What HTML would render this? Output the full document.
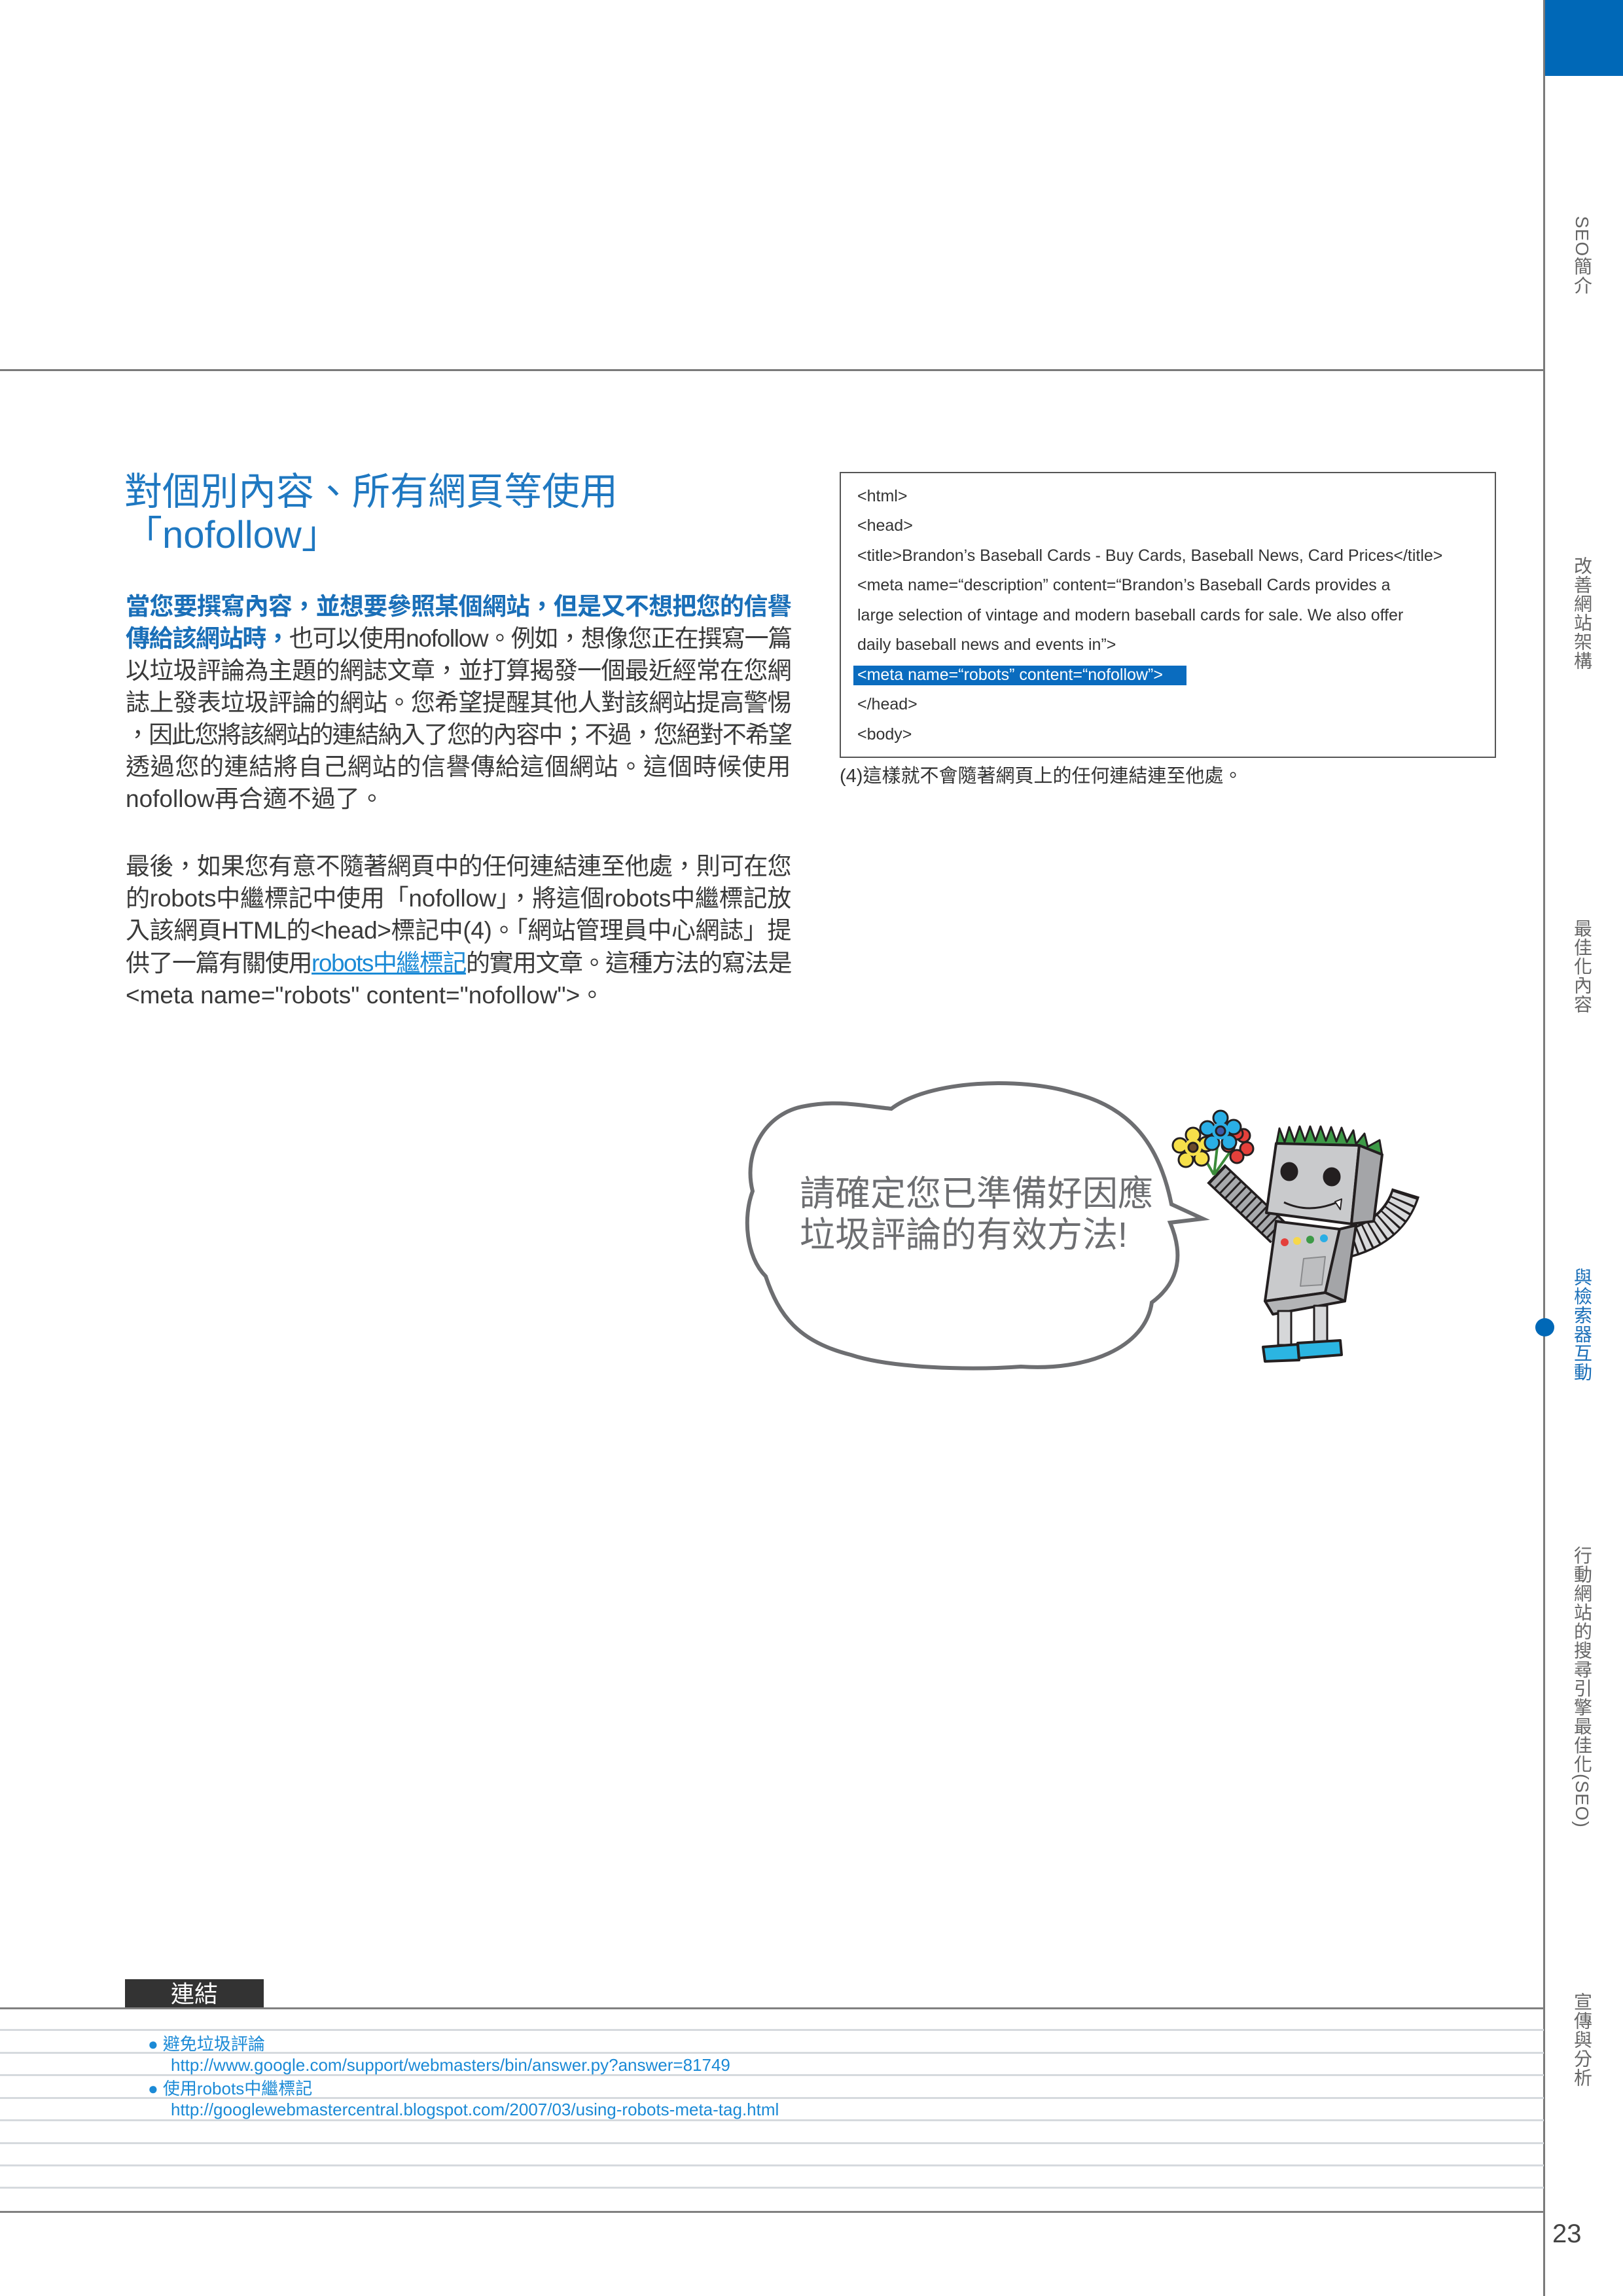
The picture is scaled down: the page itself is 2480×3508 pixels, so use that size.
<!DOCTYPE html>
<html><head><meta charset="utf-8">
<style>
*{margin:0;padding:0;box-sizing:border-box}
html,body{width:2480px;height:3508px;background:#fff;overflow:hidden}
body{position:relative;font-family:"Liberation Sans","Noto Sans CJK TC",sans-serif;color:#3a3a3a}
.a{position:absolute}
.ln{position:absolute;left:192px;width:1017px;white-space:nowrap;font-size:37px;line-height:49px;height:49px}
.ln>span.f{display:inline-block;white-space:nowrap}
.b{color:#1a6fb8;font-weight:bold}
.code{position:absolute;left:1310px;font-size:25px;line-height:45px;white-space:nowrap;color:#333}
.tab{position:absolute;left:2402px;writing-mode:vertical-rl;font-size:28px;color:#666;letter-spacing:1px;line-height:30px}
.lt{position:absolute;left:0;width:2359px;height:3px;background:#d6dade}
.lk{position:absolute;font-size:26px;color:#1b8ad6;white-space:nowrap;line-height:30px}
</style></head><body>

<div class="a" style="left:2360px;top:0;width:120px;height:116px;background:#0068b7"></div>
<div class="a" style="left:2358px;top:0;width:3px;height:3508px;background:#7a7a7a"></div>
<div class="a" style="left:0;top:564px;width:2359px;height:3px;background:#7a7a7a"></div>
<div class="a" style="left:2346px;top:2014px;width:29px;height:28px;border-radius:50%;background:#0068b7"></div>

<div class="tab" style="top:330px">SEO簡介</div>
<div class="tab" style="top:850px">改善網站架構</div>
<div class="tab" style="top:1404px">最佳化內容</div>
<div class="tab" style="top:1937px;color:#1a6fb8">與檢索器互動</div>
<div class="tab" style="top:2362px">行動網站的搜尋引擎最佳化(SEO)</div>
<div class="tab" style="top:3044px">宣傳與分析</div>

<div class="a" style="left:190px;top:719px;font-size:58px;line-height:66px;color:#1f78c1;white-space:nowrap">對個別內容、所有網頁等使用<br>「nofollow」</div>

<div class="ln" style="top:902px"><span class="f j"><span class="b">當您要撰寫內容，並想要參照某個網站，但是又不想把您的信譽</span></span></div>
<div class="ln" style="top:951px"><span class="f j"><span class="b">傳給該網站時，</span>也可以使用nofollow。例如，想像您正在撰寫一篇</span></div>
<div class="ln" style="top:1000px"><span class="f j">以垃圾評論為主題的網誌文章，並打算揭發一個最近經常在您網</span></div>
<div class="ln" style="top:1049px"><span class="f j">誌上發表垃圾評論的網站。您希望提醒其他人對該網站提高警惕</span></div>
<div class="ln" style="top:1098px"><span class="f j">，因此您將該網站的連結納入了您的內容中；不過，您絕對不希望</span></div>
<div class="ln" style="top:1147px"><span class="f j">透過您的連結將自己網站的信譽傳給這個網站。這個時候使用</span></div>
<div class="ln" style="top:1196px"><span class="f">nofollow再合適不過了。</span></div>

<div class="ln" style="top:1299px"><span class="f j">最後，如果您有意不隨著網頁中的任何連結連至他處，則可在您</span></div>
<div class="ln" style="top:1348px"><span class="f j">的robots中繼標記中使用「nofollow」，將這個robots中繼標記放</span></div>
<div class="ln" style="top:1397px"><span class="f j">入該網頁HTML的&lt;head&gt;標記中(4)。「網站管理員中心網誌」提</span></div>
<div class="ln" style="top:1447px"><span class="f j">供了一篇有關使用<span style="color:#1b8ad6;text-decoration:underline">robots中繼標記</span>的實用文章。這種方法的寫法是</span></div>
<div class="ln" style="top:1496px"><span class="f">&lt;meta name="robots" content="nofollow"&gt;。</span></div>

<div class="a" style="left:1283px;top:721px;width:1003px;height:437px;border:2.5px solid #555"></div>
<div class="a" style="left:1304px;top:1017px;width:509px;height:30px;background:#0a6cbf"></div>
<div class="code" style="top:736px">&lt;html&gt;</div>
<div class="code" style="top:781px">&lt;head&gt;</div>
<div class="code" style="top:827px">&lt;title&gt;Brandon’s Baseball Cards - Buy Cards, Baseball News, Card Prices&lt;/title&gt;</div>
<div class="code" style="top:872px">&lt;meta name=“description” content=“Brandon’s Baseball Cards provides a</div>
<div class="code" style="top:918px">large selection of vintage and modern baseball cards for sale. We also offer</div>
<div class="code" style="top:963px">daily baseball news and events in”&gt;</div>
<div class="code" style="top:1009px;color:#fff">&lt;meta name=“robots” content=“nofollow”&gt;</div>
<div class="code" style="top:1054px">&lt;/head&gt;</div>
<div class="code" style="top:1100px">&lt;body&gt;</div>
<div class="a" style="left:1283px;top:1169px;font-size:29px;line-height:34px;color:#333;white-space:nowrap">(4)這樣就不會隨著網頁上的任何連結連至他處。</div>

<svg class="a" style="left:0;top:0" width="2360" height="2200" viewBox="0 0 2360 2200">
  <path d="M1362,1694 C1420,1650 1560,1645 1640,1670 C1720,1690 1770,1740 1790,1840 L1838,1862 L1788,1868 C1810,1920 1800,1960 1760,1990 C1750,2060 1660,2095 1560,2088 C1480,2094 1360,2090 1300,2070 C1220,2050 1190,2010 1170,1950 C1140,1920 1135,1860 1150,1820 C1135,1760 1170,1700 1230,1690 C1280,1680 1320,1690 1362,1694 Z" fill="#fff" stroke="#6d6e71" stroke-width="6"/>
  <g stroke="#231f20" stroke-width="3" stroke-linejoin="round">
    <path d="M1955,1885 L1858,1793" stroke="#231f20" stroke-width="40" fill="none"/>
    <path d="M1955,1885 L1860,1795" stroke="#a7a9ac" stroke-width="33" fill="none" stroke-dasharray="8 3"/>
    <path d="M2060,1900 Q2130,1880 2148,1822" stroke="#231f20" stroke-width="44" fill="none"/>
    <path d="M2060,1900 Q2130,1880 2147,1825" stroke="#d8d9db" stroke-width="37" fill="none" stroke-dasharray="8 3"/>
    <path d="M1855,1795 L1835,1760 M1855,1795 L1862,1735 M1855,1795 L1885,1752" stroke="#3b8b3a" stroke-width="4" fill="none"/>
    <g fill="#e4403b"><circle cx="1900" cy="1735" r="10"/><circle cx="1905" cy="1755" r="10"/><circle cx="1890" cy="1767" r="10"/><circle cx="1877" cy="1750" r="10"/><circle cx="1890" cy="1732" r="9"/></g>
    <g fill="#f6e04a"><circle cx="1823" cy="1734" r="11"/><circle cx="1843" cy="1748" r="11"/><circle cx="1836" cy="1770" r="11"/><circle cx="1812" cy="1772" r="11"/><circle cx="1803" cy="1750" r="11"/><circle cx="1823" cy="1753" r="13" stroke="none"/></g>
    <circle cx="1823" cy="1753" r="7" fill="#6b4a2b"/>
    <g fill="#2aaee5"><circle cx="1865" cy="1708" r="11"/><circle cx="1885" cy="1722" r="11"/><circle cx="1878" cy="1745" r="11"/><circle cx="1852" cy="1746" r="11"/><circle cx="1845" cy="1724" r="11"/><circle cx="1865" cy="1728" r="13" stroke="none"/></g>
    <circle cx="1865" cy="1728" r="7" fill="#3c5aa8"/>
    <path d="M1950,1750 L1955,1724 L1963,1745 L1970,1722 L1978,1744 L1986,1721 L1994,1743 L2002,1721 L2010,1743 L2018,1721 L2026,1743 L2034,1722 L2042,1744 L2050,1723 L2058,1745 L2068,1727 L2072,1748 L2085,1732 L2090,1752 L2108,1742 L2112,1765 Z" fill="#3d9a47"/>
    <path d="M1950,1747 L2077,1750 L2065,1870 L1935,1853 Z" fill="#c9cacc" stroke-width="4"/>
    <path d="M2077,1750 L2112,1764 L2099,1866 L2065,1870 Z" fill="#a4a5a8" stroke-width="4"/>
    <ellipse cx="1970" cy="1790" rx="12" ry="13" fill="#231f20"/>
    <ellipse cx="2035" cy="1798" rx="12" ry="13" fill="#231f20"/>
    <path d="M1962,1837 Q2000,1855 2043,1837" fill="none" stroke-width="3"/>
    <path d="M2040,1836 L2048,1848 L2050,1832 Z" fill="#fff" stroke-width="2"/>
    <path d="M1950,1866 L2047,1878 L2025,1975 L1933,1988 Z" fill="#c9cacc" stroke-width="4"/>
    <path d="M2047,1878 L2072,1872 L2055,1988 L2025,1975 Z" fill="#a4a5a8" stroke-width="4"/>
    <path d="M1933,1988 L2025,1975 L2055,1988 L1945,2008 Z" fill="#b3b4b6" stroke-width="4"/>
    <path d="M1992,1923 L2025,1920 L2020,1963 L1987,1965 Z" fill="#bdbec0" stroke="#8a8b8d" stroke-width="2"/>
    <rect x="1953" y="2003" width="20" height="52" fill="#d6d7d9"/>
    <rect x="2008" y="1995" width="20" height="55" fill="#d6d7d9"/>
    <path d="M1930,2058 L1983,2054 L1985,2078 L1933,2080 Z" fill="#2bb5e2" stroke-width="4"/>
    <path d="M1983,2052 L2048,2048 L2050,2070 L1985,2075 Z" fill="#2bb5e2" stroke-width="4"/>
  </g>
  <circle cx="1963" cy="1898" r="6" fill="#e4403b"/>
  <circle cx="1982" cy="1896" r="6" fill="#f6d84a"/>
  <circle cx="2002" cy="1894" r="6" fill="#3d9a47"/>
  <circle cx="2023" cy="1892" r="6" fill="#2aaee5"/>
</svg>
<div class="a" style="left:1222px;top:1793px;font-size:54px;line-height:63px;color:#6d6e71;white-space:nowrap">請確定您已準備好因應<br>垃圾評論的有效方法!</div>

<div class="a" style="left:191px;top:3024px;width:212px;height:45px;background:#333;color:#fff;font-size:36px;line-height:45px;text-align:center">連結</div>
<div class="a" style="left:0;top:3067px;width:2359px;height:3px;background:#808080"></div>
<div class="lt" style="top:3100px"></div>
<div class="lt" style="top:3135px"></div>
<div class="lt" style="top:3169px"></div>
<div class="lt" style="top:3204px"></div>
<div class="lt" style="top:3238px"></div>
<div class="lt" style="top:3273px"></div>
<div class="lt" style="top:3307px"></div>
<div class="lt" style="top:3341px"></div>
<div class="a" style="left:0;top:3378px;width:2359px;height:3px;background:#808080"></div>

<div class="lk" style="left:226px;top:3108px">● 避免垃圾評論</div>
<div class="lk" style="left:261px;top:3140px">http://www.google.com/support/webmasters/bin/answer.py?answer=81749</div>
<div class="lk" style="left:226px;top:3176px">● 使用robots中繼標記</div>
<div class="lk" style="left:261px;top:3208px">http://googlewebmastercentral.blogspot.com/2007/03/using-robots-meta-tag.html</div>

<div class="a" style="left:2372px;top:3390px;font-size:40px;line-height:46px;color:#444">23</div>
<script>
(function(){
  var els=document.querySelectorAll('.ln>span.f');
  for(var i=0;i<els.length;i++){
    var s=els[i];
    var w=s.getBoundingClientRect().width;
    var n=(s.textContent||'').length;
    if(s.classList.contains('j')){
      if(n>1){s.style.letterSpacing=((1017-w)/n)+'px';}
    } else if(w>1017){
      s.style.transformOrigin='0 0';s.style.transform='scaleX('+(1017/w)+')';
    }
  }
})();
</script>
</body></html>
